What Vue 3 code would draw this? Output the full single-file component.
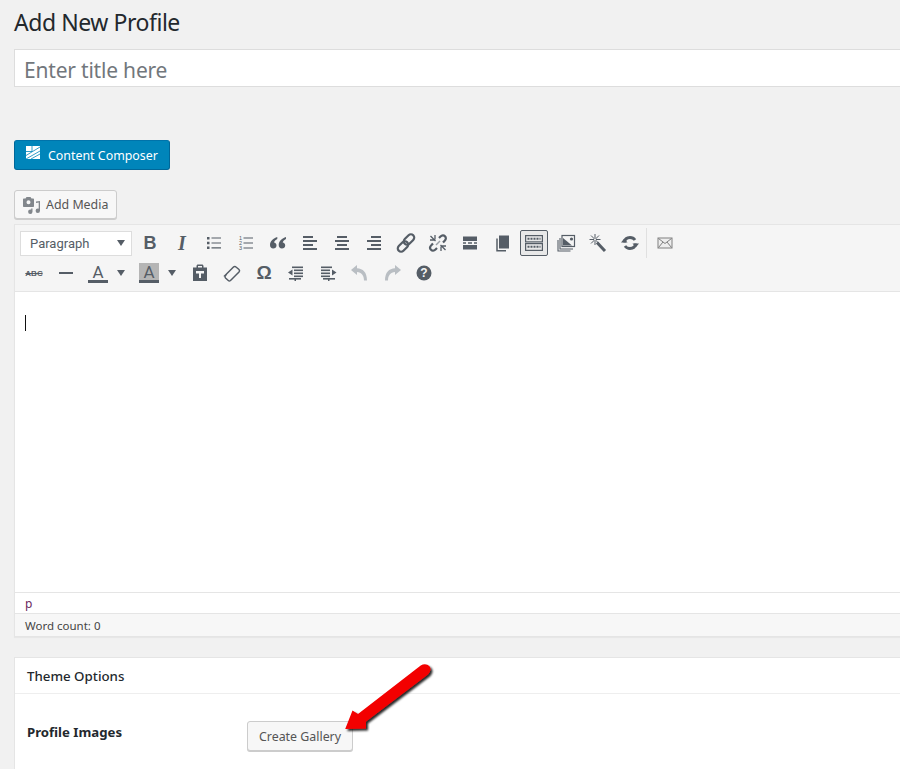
<template>
  <div class="page">
    <h1 class="page-title">Add New Profile</h1>
    <input class="title-input" type="text" placeholder="Enter title here" />

    <button class="composer-btn" type="button">
      <svg width="16" height="16" viewBox="0 0 16 16">
        <path fill="#fff" d="M1 1h14v13H1z" />
        <path stroke="#0085ba" stroke-width="0.8" fill="none" d="M7 1v5.500M1 6.500h6M1 10.500L15 2M1 14L15 6M6 14l9-5" />
      </svg>
      Content Composer
    </button>

    <button class="media-btn" type="button">
      <svg width="18" height="18" viewBox="0 0 18 18">
        <path fill="#82878c" fill-rule="evenodd" d="M1 2.500h2.500l1-1.500h4l1 1.500H11c.6 0 1 .4 1 1V10c0 .6-.4 1-1 1H2c-.6 0-1-.4-1-1V3.500c0-.6.4-1 1-1zM6.500 4.200a2 2 0 1 0 0 4 2 2 0 0 0 0-4z" />
        <path fill="#82878c" d="M18 5v9.800a2.200 2.200 0 1 1-2.200-2.200c.3 0 .6 0 .9.100V6.500L14 7V5.500zM10.500 12.500v3.300a2.200 2.200 0 1 1-2.200-2.200c.2 0 .6 0 .9.100v-1.200z" />
      </svg>
      <span class="media-text">Add Media</span>
    </button>

    <section class="editor">
      <div class="toolbar">
        <div class="tool-row">
          <div class="format-select">
            <span>Paragraph</span>
            <i class="caret"></i>
          </div>
          <template v-for="tool in rowOne" :key="tool.name">
            <span v-if="tool.name === 'sep'" class="separator"></span>
            <span v-else class="tool" :class="{ active: tool.active }">
              <b v-if="tool.label" :class="tool.cls">{{ tool.label }}</b>
              <svg v-else width="20" height="20" viewBox="0 0 20 20" v-html="tool.svg"></svg>
            </span>
          </template>
        </div>
        <div class="tool-row second">
          <span class="tool"><s class="abc">ABC</s></span>
          <span class="tool">
            <svg width="20" height="20" viewBox="0 0 20 20"><path fill="#555d66" d="M3 9h14v2H3z" /></svg>
          </span>
          <span class="split first-split">
            <span class="color-a">A</span>
            <i class="caret"></i>
          </span>
          <span class="split second-split">
            <span class="color-a shaded">A</span>
            <i class="caret"></i>
          </span>
          <span v-for="tool in rowTwo" :key="tool.name" class="tool">
            <b v-if="tool.label" :class="tool.cls">{{ tool.label }}</b>
            <svg v-else width="20" height="20" viewBox="0 0 20 20" v-html="tool.svg"></svg>
          </span>
        </div>
      </div>
      <div class="edit-area"><span class="cursor"></span></div>
      <div class="path-row">p</div>
      <div class="status-row">Word count: 0</div>
    </section>

    <section class="options">
      <h2 class="options-title">Theme Options</h2>
      <div class="options-body">
        <div class="option-label">Profile Images</div>
        <button class="gallery-btn" type="button">Create Gallery</button>
      </div>
    </section>

    <svg class="arrow" width="110" height="90" viewBox="0 0 110 90">
      <defs>
        <filter id="arrow-shadow" x="-20%" y="-20%" width="150%" height="150%">
          <feDropShadow dx="2" dy="2" stdDeviation="1.2" flood-color="#000" flood-opacity="0.85" />
        </filter>
      </defs>
      <path
        fill="#f30505"
        filter="url(#arrow-shadow)"
        d="M3.200 65L10.500 46.500 16 50 78.700 1.500c3-2 6.700-1.700 8.700 .8 2 2.700 1 6-1.500 8.200L24 57.500v7z"
      />
    </svg>
  </div>
</template>

<script setup>
const bars = (rows, h = 2) =>
  rows.map((r) => `<rect x="${r[0]}" y="${r[1]}" width="${r[2]}" height="${h}" fill="#555d66"/>`).join("");

const rowOne = [
  { name: "bold", label: "B", cls: "glyph-b" },
  { name: "italic", label: "I", cls: "glyph-i" },
  {
    name: "ul",
    svg: `<path d="M3 4h2.500v2.500H3zM3 8.800h2.500v2.500H3zM3 13.500h2.500V16H3z" fill="#555d66"/><path d="M7.500 5H17M7.500 10H17M7.500 14.800H17" stroke="#555d66" stroke-width="1.200"/>`,
  },
  {
    name: "ol",
    svg: `<text x="3" y="7" font-size="5.500" font-family="Liberation Sans" fill="#555d66">1</text><text x="3" y="12" font-size="5.500" font-family="Liberation Sans" fill="#555d66">2</text><text x="3" y="17" font-size="5.500" font-family="Liberation Sans" fill="#555d66">3</text><path d="M7.500 5H17M7.500 10H17M7.500 15H17" stroke="#555d66" stroke-width="1.200"/>`,
  },
  {
    name: "quote",
    svg: `<path fill="#555d66" d="M9.300 4C5.500 5.200 2 8 2 12c0 2 1.300 3.500 3.200 3.500S8.500 14.200 8.500 12.400c0-1.600-1-2.800-2.500-2.900.3-1.500 1.700-2.800 3.300-3.500zM18 4c-3.800 1.200-7.300 4-7.300 8 0 2 1.300 3.500 3.200 3.500s3.300-1.300 3.300-3.100c0-1.600-1-2.800-2.500-2.900.3-1.500 1.700-2.800 3.300-3.500z"/>`,
  },
  { name: "left", svg: bars([[3, 3, 10], [3, 7, 14], [3, 11, 10], [3, 15, 14]]) },
  { name: "center", svg: bars([[5, 3, 10], [3, 7, 14], [5, 11, 10], [3, 15, 14]]) },
  { name: "right", svg: bars([[7, 3, 10], [3, 7, 14], [7, 11, 10], [3, 15, 14]]) },
  {
    name: "link",
    svg: `<g fill="none" stroke="#555d66" stroke-width="2.200"><rect x="9.700" y="0.500" width="6.600" height="12" rx="3.300" transform="rotate(45 13 6.500)"/><rect x="3.700" y="7.500" width="6.600" height="12" rx="3.300" transform="rotate(45 7 13.500)"/></g>`,
  },
  {
    name: "unlink",
    svg: `<g fill="none" stroke="#555d66" stroke-width="2.200"><path d="M11 5l1.500-1.500c1.500-1.500 3.300-1.500 4.500-.3s1.200 3-.3 4.500L15 9.500"/><path d="M9 15l-1.500 1.500c-1.500 1.500-3.300 1.500-4.500 .3s-1.200-3 .3-4.500L5 10.500"/></g><path d="M2.500 3l5 5M12.500 12l5 5M7 2v4.500M2 7h4.500M13.500 13H18M13 13.500V18" stroke="#555d66" stroke-width="1.300"/><path d="M8 12l4-4" stroke="#9aa0a6" stroke-width="1.500"/>`,
  },
  {
    name: "hr",
    svg: `<path fill="#555d66" d="M3 3.500h14v4.500H3zM3 12h14v4.500H3z"/><path d="M3 10h3M8 10h4M14 10h3" stroke="#555d66" stroke-width="1.500"/>`,
  },
  {
    name: "copy",
    svg: `<path fill="#555d66" d="M7 2.500h10v13H7z"/><path fill="none" stroke="#555d66" stroke-width="1.500" d="M5 5.500v12.200h9"/>`,
  },
  {
    name: "kitchen",
    active: true,
    svg: `<g fill="none" stroke="#555d66" stroke-width="1.200"><rect x="1.600" y="2.600" width="16.800" height="6.300"/><rect x="1.600" y="10.600" width="16.800" height="6.800"/></g><path stroke="#555d66" stroke-width="2" stroke-dasharray="2 1" d="M3.500 5.800h13M3.500 13.800h13"/>`,
  },
  {
    name: "gallery",
    svg: `<path fill="none" stroke="#555d66" stroke-width="1.100" d="M2 7v11h12.500M4 5v11h13"/><rect x="6" y="2.500" width="12.500" height="11" fill="#f5f5f5" stroke="#555d66" stroke-width="1.200"/><path fill="#555d66" d="M7 12.500V5l9 7.500z"/><circle cx="15.500" cy="6" r="1.600" fill="#555d66"/>`,
  },
  {
    name: "wand",
    svg: `<path stroke="#555d66" stroke-width="3" d="M9 9.500l8 8.500"/><path stroke="#555d66" stroke-width="1" d="M7 1v11M1.500 6.500h11M3 2.500l8 8M11 2.500l-8 8"/><circle cx="7" cy="6.500" r="1" fill="#f5f5f5"/>`,
  },
  {
    name: "refresh",
    svg: `<path fill="none" stroke="#555d66" stroke-width="2.800" d="M4.200 9.500C4.700 6.500 7 4.500 10 4.500c2.200 0 4 1 5 2.500M15.800 10.500c-.5 3-2.800 5-5.800 5-2.200 0-4-1-5-2.500"/><path fill="#555d66" d="M1 9.500h6.500L4.200 5.500zM19 10.500h-6.500l3.300 4z"/>`,
  },
  { name: "sep" },
  {
    name: "mail",
    svg: `<rect x="3" y="5" width="14" height="10" fill="#eee" stroke="#808080"/><path fill="none" stroke="#808080" d="M3.500 5.500l6.500 5 6.500-5M3.500 14.500l4.500-5.500M16.500 14.500L12 9"/>`,
  },
];

const rowTwo = [
  {
    name: "paste",
    svg: `<path fill="#555d66" d="M3 4.500h3.500V3c0-.8.7-1.500 1.500-1.500h4c.8 0 1.500.7 1.500 1.500v1.500H17V18H3zM8 3v1.500h4V3zM6 8v2.500h3V15h2v-4.500h3V8z" fill-rule="evenodd"/>`,
  },
  {
    name: "eraser",
    svg: `<path fill="none" stroke="#555d66" stroke-width="1.500" d="M3 12.500l8.500-8.500c.8-.8 1.800-.8 2.500 0l3 2.500c.7.7.7 1.700 0 2.500l-8.500 8.500c-.8.7-1.500.7-2.200 0l-2.800-2.500c-.7-.7-.7-1.700 0-2.500z"/>`,
  },
  { name: "omega", label: "Ω", cls: "glyph-omega" },
  {
    name: "outdent",
    svg: `<path fill="#555d66" d="M2 9.500L6.500 6.500v6z"/>` + bars([[6, 3.500, 11], [8, 6.500, 9], [8, 9.500, 9], [8, 12.500, 9], [3, 15, 12]], 1.600) + `<rect x="8.500" y="16" width="1.500" height="2" fill="#555d66"/>`,
  },
  {
    name: "indent",
    svg: `<path fill="#555d66" d="M18.500 9.500L14 6.500v6z"/>` + bars([[3, 3.500, 11], [3, 6.500, 9], [3, 9.500, 9], [3, 12.500, 9], [5, 15, 12]], 1.600) + `<rect x="10" y="16" width="1.500" height="2" fill="#555d66"/>`,
  },
  {
    name: "undo",
    svg: `<path fill="#b9bec3" d="M1 7l6-5v3.200c6 .3 10 4 10 12.300h-3c0-5-2.500-8.200-7-8.500V12z"/>`,
  },
  {
    name: "redo",
    svg: `<path fill="#b9bec3" d="M19 7l-6-5v3.200C7 5.500 3 9.200 3 17.500h3c0-5 2.500-8.200 7-8.500V12z"/>`,
  },
  {
    name: "help",
    svg: `<circle cx="10" cy="10" r="7.500" fill="#555d66"/><text x="10" y="14.200" text-anchor="middle" font-size="12" font-weight="700" font-family="Liberation Sans" fill="#f5f5f5">?</text>`,
  },
];
</script>

<style>
html,
body {
  margin: 0;
  overflow: hidden;
  background: #f1f1f1;
}
</style>

<style scoped>
.page {
  position: relative;
  width: 900px;
  height: 769px;
  overflow: hidden;
  box-sizing: border-box;
  padding-left: 14px;
  background: #f1f1f1;
  font-family: "Noto Sans", "Open Sans", sans-serif;
  color: #23282d;
}

.page-title {
  margin: 0;
  height: 49px;
  box-sizing: border-box;
  padding-top: 6px;
  font-size: 23px;
  line-height: 33px;
  font-weight: 400;
  letter-spacing: -0.45px;
  color: #23282d;
}

.title-input {
  display: block;
  width: 1000px;
  height: 38px;
  box-sizing: border-box;
  border: 1px solid #ddd;
  padding: 3px 9px 0;
  background: #fff;
  font-family: inherit;
  font-size: 21px;
  letter-spacing: -0.2px;
  outline: none;
}

.title-input::placeholder {
  color: #72777c;
  opacity: 1;
}

button {
  font-family: inherit;
  cursor: pointer;
}

.composer-btn {
  display: flex;
  align-items: center;
  gap: 7px;
  width: 156px;
  height: 30px;
  margin-top: 53px;
  padding: 0 0 0 10px;
  box-sizing: border-box;
  border: 1px solid #006799;
  border-top-color: #0073aa;
  border-radius: 3px;
  background: #0085ba;
  color: #fff;
  font-size: 12.4px;
}

.composer-btn svg {
  margin-top: -4px;
}

.media-btn {
  display: flex;
  align-items: center;
  gap: 6px;
  width: 103px;
  height: 29px;
  margin-top: 20px;
  padding: 0 0 0 7px;
  box-sizing: border-box;
  border: 1px solid #ccc;
  border-radius: 3px;
  background: #f7f7f7;
  box-shadow: 0 1px 0 #ccc;
  color: #555;
  font-size: 12.4px;
}

.media-text {
  margin-top: 0;
}

.editor {
  width: 1000px;
  margin-top: 5px;
  border: 1px solid #e5e5e5;
  box-shadow: 0 1px 1px rgba(0, 0, 0, 0.04);
}

.toolbar {
  height: 67px;
  box-sizing: border-box;
  padding: 5px 0 0 5px;
  background: #f5f5f5;
  border-bottom: 1px solid #e5e5e5;
}

.tool-row {
  display: flex;
  align-items: center;
  height: 26px;
}

.tool-row.second {
  margin-top: 4px;
  margin-left: -2px;
}

.format-select {
  display: flex;
  align-items: center;
  justify-content: space-between;
  width: 112px;
  height: 25px;
  box-sizing: border-box;
  margin-right: 2px;
  padding: 0 6px 0 9px;
  border: 1px solid #ddd;
  background: #fff;
  font-family: Roboto, "Noto Sans", sans-serif;
  font-size: 13px;
  color: #555d66;
}

.caret {
  display: block;
  width: 0;
  height: 0;
  border-left: 4px solid transparent;
  border-right: 4px solid transparent;
  border-top: 6px solid #555d66;
}

.tool {
  display: flex;
  align-items: center;
  justify-content: center;
  flex: 0 0 32px;
  height: 26px;
  box-sizing: border-box;
  color: #555d66;
}

.tool svg {
  display: block;
}

.tool.active {
  flex: 0 0 28px;
  margin: 0 2px;
  border: 1px solid #555d66;
  border-radius: 2px;
  background: #e8e8e8;
}

.separator {
  flex: 0 0 1px;
  height: 30px;
  margin: 0 2px 0 0;
  background: #e0e0e0;
}

.glyph-b {
  font-family: "Liberation Sans", sans-serif;
  font-size: 18px;
  font-weight: 700;
}

.glyph-i {
  font-family: "Liberation Serif", serif;
  font-size: 20px;
  font-weight: 700;
  font-style: italic;
}

.glyph-omega {
  font-family: "Liberation Sans", sans-serif;
  font-size: 19px;
  font-weight: 700;
}

.abc {
  font-family: "Liberation Sans", sans-serif;
  font-size: 8px;
  font-weight: 700;
  color: #555d66;
}

.split {
  display: flex;
  align-items: center;
  height: 26px;
  box-sizing: border-box;
}

.first-split {
  flex: 0 0 52px;
  padding-left: 6px;
  gap: 9px;
}

.second-split {
  flex: 0 0 50px;
  padding-left: 5px;
  gap: 9px;
}

.color-a {
  width: 20px;
  height: 20px;
  box-sizing: border-box;
  border-bottom: 3px solid #555d66;
  text-align: center;
  font-family: Roboto, sans-serif;
  font-size: 17px;
  line-height: 18px;
  color: #555d66;
}

.color-a.shaded {
  background: #b5b5b5;
}

.edit-area {
  height: 300px;
  box-sizing: border-box;
  padding: 23px 0 0 10px;
  background: #fff;
}

.cursor {
  display: block;
  width: 1px;
  height: 16px;
  background: #111;
}

.path-row {
  height: 21px;
  box-sizing: border-box;
  padding-left: 10px;
  border-top: 1px solid #e5e5e5;
  background: #fff;
  font-size: 12px;
  line-height: 22px;
  color: #6b2a5e;
}

.status-row {
  height: 23px;
  box-sizing: border-box;
  padding-left: 10px;
  border-top: 1px solid #e5e5e5;
  background: #f7f7f7;
  font-size: 11.5px;
  line-height: 23px;
  color: #444;
}

.options {
  width: 1000px;
  height: 200px;
  margin-top: 20px;
  border: 1px solid #e5e5e5;
  background: #fff;
}

.options-title {
  margin: 0;
  height: 36px;
  box-sizing: border-box;
  padding-left: 12px;
  border-bottom: 1px solid #eee;
  font-size: 13.3px;
  font-weight: 500;
  line-height: 36px;
  color: #23282d;
}

.options-body {
  display: flex;
  align-items: flex-start;
  padding: 27px 0 0 12px;
}

.option-label {
  width: 220px;
  font-size: 13.2px;
  font-weight: 700;
  line-height: 22px;
  color: #23282d;
}

.gallery-btn {
  width: 106px;
  height: 30px;
  border: 1px solid #ccc;
  border-radius: 3px;
  background: #f7f7f7;
  box-shadow: 0 1px 0 #ccc;
  color: #555;
  font-size: 12.4px;
}

.arrow {
  position: absolute;
  left: 342px;
  top: 664px;
}
</style>
